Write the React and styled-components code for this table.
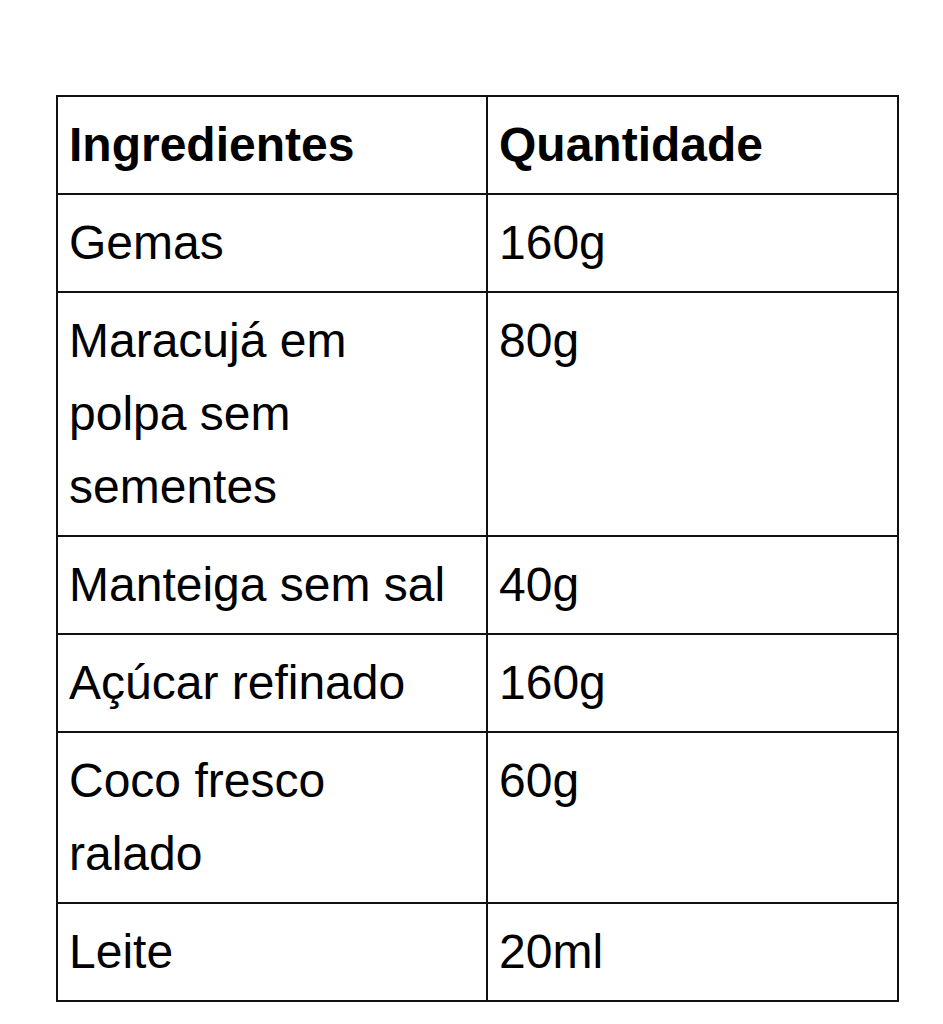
import styled, { createGlobalStyle } from "styled-components";

const GlobalStyle = createGlobalStyle`
  body {
    margin: 0;
    background: #ffffff;
    font-family: "Liberation Sans", Arial, sans-serif;
    color: #000000;
  }
`;

const rows = [
  ["Gemas", "160g"],
  ["Maracujá em polpa sem sementes", "80g"],
  ["Manteiga sem sal", "40g"],
  ["Açúcar refinado", "160g"],
  ["Coco fresco ralado", "60g"],
  ["Leite", "20ml"],
];

const App = () => {
  return (
    <Page>
      <GlobalStyle />
      <Table>
        <colgroup>
          <col style={{ width: 430 }} />
          <col />
        </colgroup>
        <thead>
          <tr>
            <Cell as="th">Ingredientes</Cell>
            <Cell as="th">Quantidade</Cell>
          </tr>
        </thead>
        <tbody>
          {rows.map(([name, qty]) => (
            <tr key={name}>
              <Cell>{name}</Cell>
              <Cell>{qty}</Cell>
            </tr>
          ))}
        </tbody>
      </Table>
    </Page>
  );
};

const Page = styled.div`
  padding: 95px 0 0 56px;
`;

const Table = styled.table`
  width: 843px;
  table-layout: fixed;
  border-collapse: separate;
  border-spacing: 0;
  border-top: 2px solid #111;
  border-left: 2px solid #111;
`;

const Cell = styled.td`
  padding: 11px 26px 12px 11px;
  border-right: 2px solid #111;
  border-bottom: 2px solid #111;
  font-size: 48px;
  line-height: 73px;
  font-weight: ${(p) => (p.as === "th" ? 700 : 400)};
  text-align: left;
  vertical-align: top;
`;

export default App;
